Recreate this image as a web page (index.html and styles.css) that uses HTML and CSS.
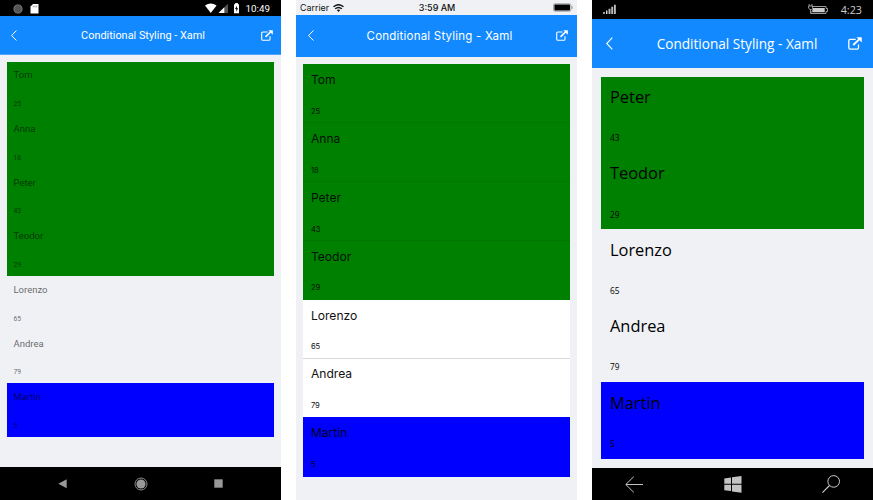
FILE: index.html
```html
<!DOCTYPE html>
<html lang="en">
<head>
<meta charset="utf-8">
<title>Conditional Styling - Xaml</title>
<link rel="stylesheet" href="styles.css">
</head>
<body>
<svg class="defs" width="0" height="0">
  <symbol id="back" viewBox="0 0 6 11"><path d="M5.4 .5 .6 5.5l4.8 5" fill="none" stroke="currentColor"/></symbol>
  <symbol id="open" viewBox="0 0 12 11"><path d="M6.6 2H1.9Q.7 2 .7 3.2v6q0 1.1 1.2 1.1h6q1.1 0 1.1-1.1V6.3" fill="none" stroke="currentColor" stroke-width="1.1"/><path d="M4.5 6.8 10 1.5" stroke="currentColor" stroke-width="1.6"/><path d="M7.3.2h4.5v4.5z" fill="currentColor"/></symbol>
</svg>
<main class="stage">
  <section class="phone android">
    <div class="status">
      <svg class="left" width="28" height="10" viewBox="0 0 28 10"><circle cx="5" cy="5" r="4.1" fill="#555" stroke="#888" stroke-width=".8"/><path d="M20 0h5.5v9.6h-8V2.6z" fill="#fff"/><path d="M20.3 1.6v1.7M22 1.6v1.7M23.7 1.6v1.7" stroke="#777" stroke-width=".7"/></svg>
      <svg class="right" width="36" height="11" viewBox="0 0 36 11"><path d="M0 2.5Q5.8-1.5 11.6 2.5L5.8 10z" fill="#fff"/><path d="M23 .7V10H13.5z" fill="#555"/><path d="M19.3 4.3V10h-5.8z" fill="#fff"/><path d="M29 1.3h1.2V0h2.7v1.3H34V10.3h-5z" fill="#fff"/><path d="M31.9 2.7 30 6h1.3v2.8L33.1 5.3h-1.2z" fill="#000"/></svg>
      <span class="time">10:49</span>
    </div>
    <header class="bar"><svg class="back"><use href="#back"/></svg><h1>Conditional Styling - Xaml</h1><svg class="open"><use href="#open"/></svg></header>
    <div class="list">
      <div class="row green"><p>Tom</p><small>25</small></div>
      <div class="row green"><p>Anna</p><small>18</small></div>
      <div class="row green"><p>Peter</p><small>43</small></div>
      <div class="row green"><p>Teodor</p><small>29</small></div>
      <div class="row"><p>Lorenzo</p><small>65</small></div>
      <div class="row"><p>Andrea</p><small>79</small></div>
      <div class="row blue"><p>Martin</p><small>5</small></div>
    </div>
    <nav class="nav">
      <svg width="9" height="10" viewBox="0 0 9 10"><path d="M8.7.3v9L.3 4.8z" fill="#999"/></svg>
      <svg width="14" height="14" viewBox="0 0 14 14"><circle cx="7" cy="7" r="6" fill="none" stroke="#999" stroke-width=".9"/><circle cx="7" cy="7" r="4.6" fill="#999"/></svg>
      <svg width="9" height="9"><path d="M.3.3h8.4v8.4H.3z" fill="#999"/></svg>
    </nav>
  </section>

  <section class="phone ios">
    <div class="status">
      <span>Carrier</span>
      <svg class="wifi" width="11" height="8" viewBox="0 0 11 8"><path d="M.5 2.7Q5.5-1.3 10.5 2.7M2.2 4.8Q5.5 2 8.8 4.8" fill="none" stroke="#111" stroke-width="1.4"/><path d="M3.8 6.1Q5.5 4.8 7.2 6.1L5.5 7.9z" fill="#111"/></svg>
      <span class="time">3:59 AM</span>
      <svg class="battery" width="20" height="9" viewBox="0 0 20 9"><rect x=".5" y=".7" width="17.4" height="7.6" rx="1.6" fill="none" stroke="#777" stroke-width=".6"/><rect x="1.4" y="1.6" width="15.6" height="5.8" rx=".7" fill="#000"/><path d="M19 3.2v2.6" stroke="#777" stroke-width=".8"/></svg>
    </div>
    <header class="bar"><svg class="back"><use href="#back"/></svg><h1>Conditional Styling - Xaml</h1><svg class="open"><use href="#open"/></svg></header>
    <div class="list">
      <div class="row green"><p>Tom</p><small>25</small></div>
      <div class="row green"><p>Anna</p><small>18</small></div>
      <div class="row green"><p>Peter</p><small>43</small></div>
      <div class="row green"><p>Teodor</p><small>29</small></div>
      <div class="row"><p>Lorenzo</p><small>65</small></div>
      <div class="row"><p>Andrea</p><small>79</small></div>
      <div class="row blue"><p>Martin</p><small>5</small></div>
    </div>
  </section>

  <section class="phone windows">
    <div class="status">
      <svg class="left" width="14" height="11" viewBox="0 0 14 11"><path d="M1 8v2M3.7 6.5V10" stroke="#ddd" stroke-width="1.4"/><path d="M6.5 4.7V10M9.2 2.7V10M11.9.7V10" stroke="#bbb" stroke-width="1.9"/></svg>
      <svg class="battery" width="21" height="12" viewBox="0 0 21 12"><path d="M4.5 3.5H18v2h1.5v3H18v2H3V8M1.2 1v2M4 1v2M.6 3h4v2.3L3.4 6.5H2L.6 5.3zM2.6 6.5v4" fill="none" stroke="#aaa" stroke-width=".9"/><path d="M5 4.9h11.7v4.3H4.3V7z" fill="#ccc"/></svg>
      <span class="time">4:23</span>
    </div>
    <header class="bar"><svg class="back"><use href="#back"/></svg><h1>Conditional Styling - Xaml</h1><svg class="open"><use href="#open"/></svg></header>
    <div class="list">
      <div class="row green"><p>Peter</p><small>43</small></div>
      <div class="row green"><p>Teodor</p><small>29</small></div>
      <div class="row"><p>Lorenzo</p><small>65</small></div>
      <div class="row"><p>Andrea</p><small>79</small></div>
      <div class="row blue"><p>Martin</p><small>5</small></div>
    </div>
    <nav class="nav">
      <svg width="18" height="17" viewBox="0 0 18 17"><path d="M18 8.5H.8M8.8.6.8 8.5l8 7.9" fill="none" stroke="#ccc" stroke-width=".95"/></svg>
      <svg width="18" height="17" viewBox="0 0 18 17"><path d="M.3 2.4 7 1.4v6.4H.3zM8 1.2 17.5 0v7.8H8zM.3 8.8H7v6.3l-6.7-.9zM8 8.8h9.5v7.9L8 15.4z" fill="#c4c4c4"/></svg>
      <svg width="18" height="18" viewBox="0 0 18 18"><circle cx="11.7" cy="6.4" r="5.8" fill="none" stroke="#ccc"/><path d="M7.5 10.5.4 17.6" stroke="#ccc" stroke-width="1.1"/></svg>
    </nav>
  </section>
</main>
</body>
</html>
```
FILE: styles.css
```css
* { box-sizing: border-box; }
body { margin: 0; background: #fff; overflow: hidden; }
.defs { position: absolute; }
.stage { display: flex; gap: 15px; width: 873px; height: 500px; }
.phone { display: flex; flex-direction: column; flex: none; width: 281px; height: 500px; background: #eff1f5; }
.status { display: flex; align-items: center; flex: none; white-space: nowrap; }
.bar { display: flex; align-items: center; flex: none; background: #1389ff; color: #fff; }
.bar svg { display: block; flex: none; }
h1 { flex: 1; margin: 0; font-weight: 400; text-align: center; white-space: nowrap; }
p { margin: 0; }
small { display: block; }
.green { background: #008000; }
.blue { background: #00f; }
.nav { display: flex; align-items: center; justify-content: space-between; flex: none; margin-top: auto; background: #000; }
.nav svg { display: block; }

/* Android */
.android { font-family: Roboto, sans-serif; }
.android .status { height: 16px; padding: 1px 11px 0 13px; background: #000; color: #fff; font-size: 9.8px; }
.android .status .right { margin: 0 5px 0 auto; }
.android .bar { height: 39px; padding: 0 8px 0 11px; border-bottom: 1px solid #4ea5fb; }
.android .back { width: 6px; height: 11px; }
.android .open { width: 12px; height: 11px; }
.android h1 { font-size: 10.9px; line-height: 14px; padding: 2.5px 0 0 8px; }
.android .list { margin: 6.5px 7px 0; color: rgba(0, 0, 0, .6); }
.android .row { height: 53.67px; padding: 6.8px 6.5px 0; }
.android p { font-size: 9.5px; line-height: 14px; }
.android small { font-size: 6.8px; line-height: 10px; margin-top: 16.7px; }
.android .nav { height: 33px; padding: 0 58px; }

/* iOS */
.ios { font-family: Inter, sans-serif; }
.ios .status { height: 15px; padding: 0 4px; color: #111; font-size: 8.9px; }
.ios .wifi { margin-left: 4px; }
.ios .time { margin: 0 auto; padding-right: 23px; font-size: 9px; font-weight: 500; }
.ios .bar { height: 42px; padding: 0 9px 1px 12px; }
.ios .back { width: 6px; height: 11px; }
.ios .open { width: 12px; height: 11px; }
.ios h1 { font-size: 11.5px; letter-spacing: .22px; line-height: 16px; padding: 1px 0 0 9px; }
.ios .list { margin: 7.3px 7.4px 0; color: #111; }
.ios .row { height: 58.86px; padding: 7.8px 7.5px 0; }
.ios .row:not(.green):not(.blue) { background: #fff; border-bottom: 1px solid #d8d8da; }
.ios .row.green:not(:nth-child(4)) { border-bottom: 1px solid #007600; }
.ios .row:nth-child(6) { border-bottom: 0 !important; }
.ios .row:last-child { height: 59.2px; }
.ios .green, .ios .blue { color: rgba(0, 0, 0, .9); }
.ios p { font-size: 12.1px; line-height: 16px; }
.ios small { font-size: 7.6px; line-height: 10px; margin-top: 18.8px; }

/* Windows */
.windows { font-family: "Open Sans", sans-serif; }
.windows .status { height: 19px; padding: 0 11px; background: #000; color: #ccc; font-size: 10.8px; }
.windows .battery { margin: -1px 12px 0 auto; }
.windows .bar { height: 49px; padding: 0 11px 0 14px; }
.windows .back { width: 7px; height: 13px; }
.windows .open { width: 14px; height: 13px; }
.windows h1 { font-size: 13.6px; line-height: 18px; padding: 1px 0 0 13px; }
.windows .list { margin: 8.6px 9px 0; color: #000; }
.windows .row { height: 76.42px; padding: 9.4px 9px 0; }
.windows p { font-size: 16.4px; line-height: 22px; }
.windows small { font-size: 8.3px; line-height: 11px; margin-top: 24.2px; }
.windows .nav { height: 32px; padding: 0 33px; }
```
